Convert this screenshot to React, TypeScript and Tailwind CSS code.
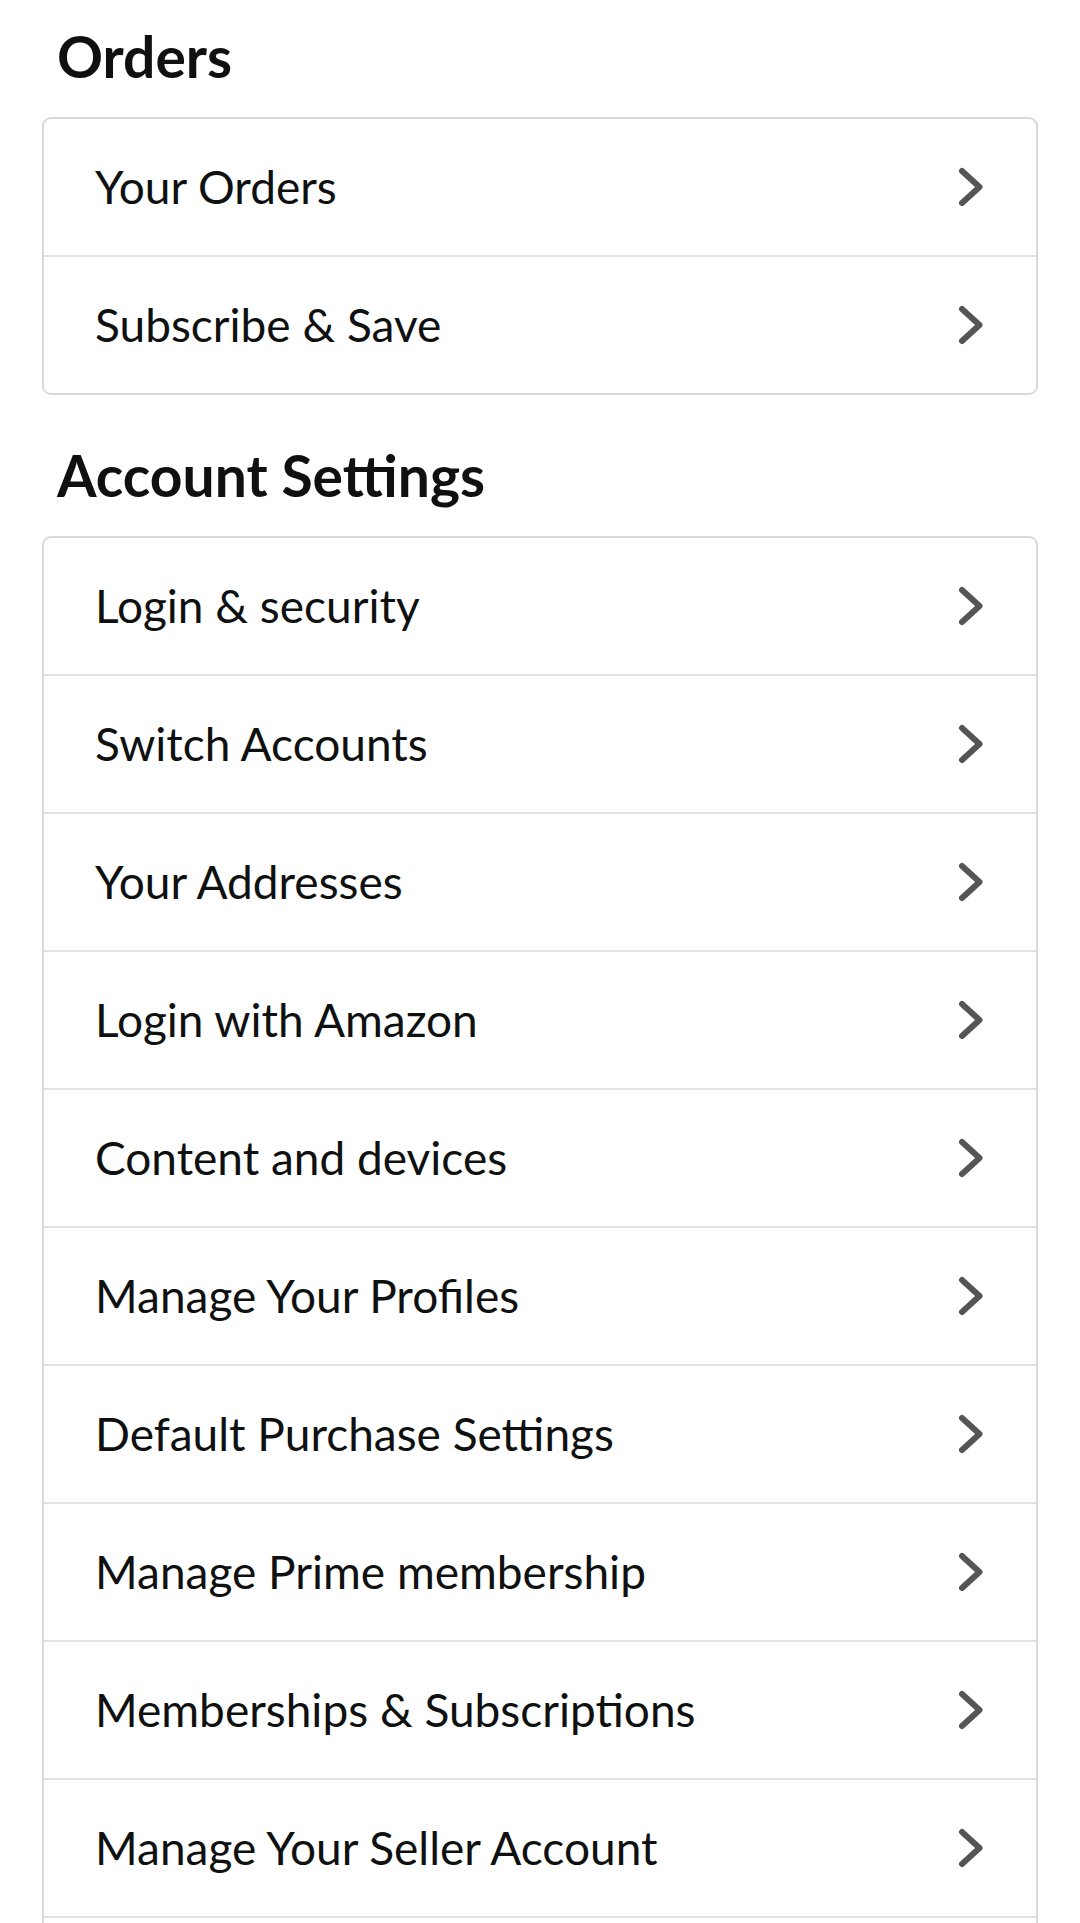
import React from "react";

const Chevron = () => (
  <svg width="26" height="40" viewBox="0 0 26 40" fill="none" aria-hidden="true">
    <path d="M4 4 L21.5 20 L4 36" stroke="#555555" strokeWidth="6" strokeLinecap="round" strokeLinejoin="round" />
  </svg>
);

const Row = ({ label, first }: { label: string; first?: boolean }) => (
  <div
    className={`flex items-center justify-between pl-[51px] pr-[52px] ${first ? "h-[136px]" : "h-[138px] border-t-2 border-[#e3e3e3]"}`}
  >
    <span className="text-[46px] leading-none text-[#0f1111]">{label}</span>
    {label ? <Chevron /> : null}
  </div>
);

const Section = ({ title, items, top, extra }: { title: string; items: string[]; top: string; extra?: boolean }) => (
  <section className={top}>
    <h2 className="pl-[57px] text-[57px] font-bold leading-[64px] text-[#0f1111]">{title}</h2>
    <div className="mx-[42px] mt-[29px] overflow-hidden rounded-[9px] border-2 border-[#d9d9d9] bg-white">
      {items.map((it, i) => (
        <Row key={it} label={it} first={i === 0} />
      ))}
      {extra ? <Row label="" /> : null}
    </div>
  </section>
);

export default function App() {
  return (
    <div className="min-h-[1923px] w-[1080px] bg-white pb-[40px]" style={{ fontFamily: 'Lato, "Noto Sans", sans-serif' }}>
      <Section title="Orders" items={["Your Orders", "Subscribe & Save"]} top="pt-[24px]" />
      <Section
        title="Account Settings"
        items={[
          "Login & security",
          "Switch Accounts",
          "Your Addresses",
          "Login with Amazon",
          "Content and devices",
          "Manage Your Profiles",
          "Default Purchase Settings",
          "Manage Prime membership",
          "Memberships & Subscriptions",
          "Manage Your Seller Account",
        ]}
        top="pt-[48px]"
        extra
      />
    </div>
  );
}
